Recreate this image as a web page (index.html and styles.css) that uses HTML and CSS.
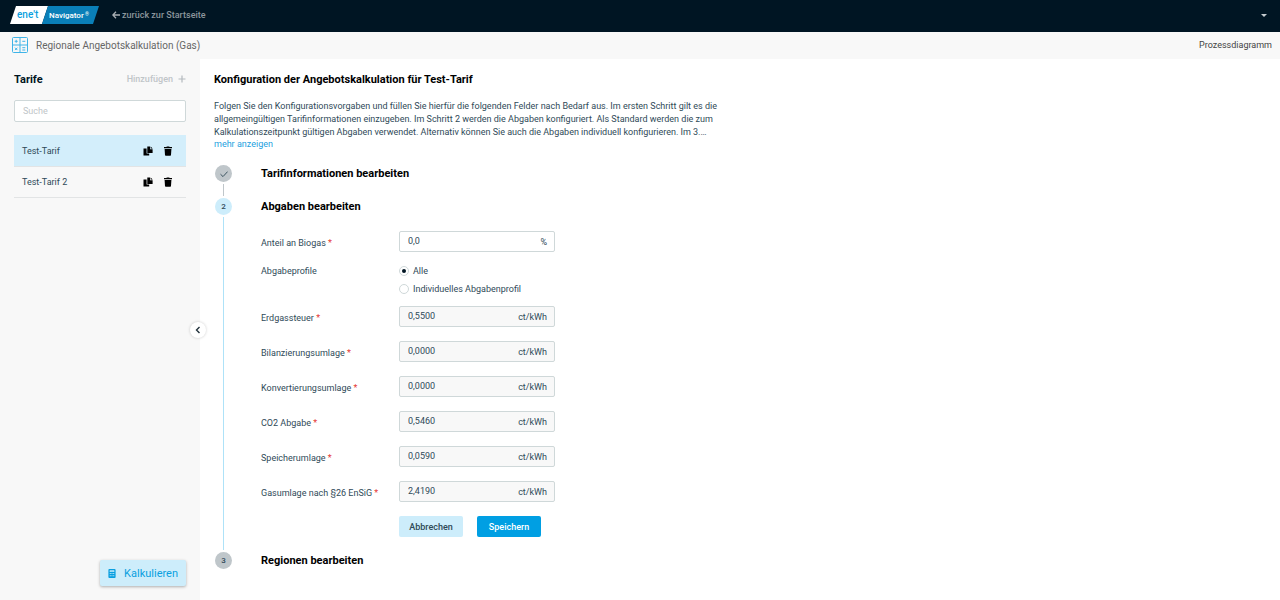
FILE: index.html
```html
<!DOCTYPE html>
<html lang="de">
<head>
    <meta charset="UTF-8">
    <meta name="viewport" content="width=device-width, initial-scale=1.0">
    <title>Regionale Angebotskalkulation (Gas)</title>
    <link rel="stylesheet" href="styles.css">
</head>
<body>
    <svg class="sprite" aria-hidden="true">
        <symbol id="icon-copy" viewBox="0 0 10 10">
            <path d="M0.5 2.5H3.6V7.6H6.2V9.5H0.5Z M4.3 0.5H7V3.2H9.6V7H4.3Z M7.6 0.4L9.7 2.6H7.6Z"/>
        </symbol>
        <symbol id="icon-trash" viewBox="0 0 10 10">
            <path d="M1 1H3.4L3.8 0.4H6.2L6.6 1H9V2.3H1Z M1.6 3H8.4L8 9C8 9.4 7.7 9.7 7.2 9.7H2.8C2.3 9.7 2 9.4 2 9Z"/>
        </symbol>
    </svg>

    <header class="topbar">
        <svg class="logo" viewBox="0 0 90 18" role="img" aria-label="ene't Navigator">
            <path d="M6 0H38L32 18H0Z" fill="#fff"/>
            <path d="M38 0H89L83 18H32Z" fill="#0a7fb8"/>
            <text class="logo-brand" x="7" y="12">ene't</text>
            <text class="logo-name" x="39" y="12">Navigator</text>
            <text class="logo-mark" x="75" y="10">®</text>
        </svg>
        <a class="back-link" href="#">
            <svg class="back-icon" viewBox="0 0 8 8"><path d="M8 4H1M4 0.8L0.8 4L4 7.2"/></svg>
            zurück zur Startseite
        </a>
        <button class="user-menu" type="button" aria-label="Benutzermenü"></button>
    </header>

    <div class="subbar">
        <svg class="calc-icon" viewBox="0 0 16 16">
            <rect x="0.5" y="0.5" width="15" height="15" rx="1"/>
            <path d="M8 0.5V15.5M0.5 8H15.5M2.7 4.3H5.7M4.2 2.8V5.8M10.3 4.3H13.3M3 10.7L5.4 13.1M5.4 10.7L3 13.1M10.3 10.7H13.3M10.3 13H13.3"/>
        </svg>
        <h1 class="page-title">Regionale Angebotskalkulation (Gas)</h1>
        <a class="process-link" href="#">Prozessdiagramm</a>
    </div>

    <div class="layout">
        <aside class="sidebar">
            <div class="sidebar-head">
                <h2 class="sidebar-title">Tarife</h2>
                <button class="add-btn" type="button">
                    Hinzufügen
                    <svg class="plus-icon" viewBox="0 0 8 8"><path d="M4 0.5V7.5M0.5 4H7.5"/></svg>
                </button>
            </div>
            <input class="search" type="text" placeholder="Suche" aria-label="Suche">
            <ul class="tariffs">
                <li class="tariff active">
                    <span class="tariff-name">Test-Tarif</span>
                    <button class="icon-btn" type="button" aria-label="Kopieren"><svg><use href="#icon-copy"/></svg></button>
                    <button class="icon-btn" type="button" aria-label="Löschen"><svg><use href="#icon-trash"/></svg></button>
                </li>
                <li class="tariff">
                    <span class="tariff-name">Test-Tarif 2</span>
                    <button class="icon-btn" type="button" aria-label="Kopieren"><svg><use href="#icon-copy"/></svg></button>
                    <button class="icon-btn" type="button" aria-label="Löschen"><svg><use href="#icon-trash"/></svg></button>
                </li>
            </ul>
            <button class="calc-btn" type="button">
                <svg class="calc-btn-icon" viewBox="0 0 8 10">
                    <rect width="8" height="10" rx="1" fill="#0a9fe0"/>
                    <path d="M1.5 2.5H6.5M1.5 5H6.5M1.5 7.5H6.5" stroke="#cdedfb" stroke-dasharray="1.2 0.7"/>
                    <path d="M1.5 2.2H6.5" stroke="#cdedfb" stroke-width="1.4"/>
                </svg>
                Kalkulieren
            </button>
            <button class="collapse-btn" type="button" aria-label="Seitenleiste einklappen">
                <svg viewBox="0 0 6 8"><path d="M4.5 1L1.5 4L4.5 7"/></svg>
            </button>
        </aside>

        <main class="content">
            <h2 class="content-title">Konfiguration der Angebotskalkulation für Test-Tarif</h2>
            <p class="intro">Folgen Sie den Konfigurationsvorgaben und füllen Sie hierfür die folgenden Felder nach Bedarf aus. Im ersten Schritt gilt es die allgemeingültigen Tarifinformationen einzugeben. Im Schritt 2 werden die Abgaben konfiguriert. Als Standard werden die zum Kalkulationszeitpunkt gültigen Abgaben verwendet. Alternativ können Sie auch die Abgaben individuell konfigurieren. Im 3.…</p>
            <a class="more-link" href="#">mehr anzeigen</a>

            <ol class="steps">
                <li class="step done">
                    <div class="step-track">
                        <span class="step-dot"><svg viewBox="0 0 8 8"><path d="M0.5 4.2L3 6.6L7.6 1.6"/></svg></span>
                    </div>
                    <h3 class="step-title">Tarifinformationen bearbeiten</h3>
                </li>
                <li class="step current">
                    <div class="step-track"><span class="step-dot">2</span></div>
                    <div class="step-body">
                        <h3 class="step-title">Abgaben bearbeiten</h3>
                        <form class="form">
                            <div class="row">
                                <label class="label" for="biogas">Anteil an Biogas <span class="required">*</span></label>
                                <div class="field"><input id="biogas" type="text" value="0,0"><span class="unit">%</span></div>
                            </div>
                            <div class="row profile-row" role="radiogroup" aria-labelledby="profile-label">
                                <span class="label" id="profile-label">Abgabeprofile</span>
                                <div class="radios">
                                    <label class="radio"><input type="radio" name="profile" checked>Alle</label>
                                    <label class="radio"><input type="radio" name="profile">Individuelles Abgabenprofil</label>
                                </div>
                            </div>
                            <div class="row">
                                <label class="label" for="erdgas">Erdgassteuer <span class="required">*</span></label>
                                <div class="field locked"><input id="erdgas" type="text" value="0,5500" readonly><span class="unit">ct/kWh</span></div>
                            </div>
                            <div class="row">
                                <label class="label" for="bilanz">Bilanzierungsumlage <span class="required">*</span></label>
                                <div class="field locked"><input id="bilanz" type="text" value="0,0000" readonly><span class="unit">ct/kWh</span></div>
                            </div>
                            <div class="row">
                                <label class="label" for="konv">Konvertierungsumlage <span class="required">*</span></label>
                                <div class="field locked"><input id="konv" type="text" value="0,0000" readonly><span class="unit">ct/kWh</span></div>
                            </div>
                            <div class="row">
                                <label class="label" for="co2">CO2 Abgabe <span class="required">*</span></label>
                                <div class="field locked"><input id="co2" type="text" value="0,5460" readonly><span class="unit">ct/kWh</span></div>
                            </div>
                            <div class="row">
                                <label class="label" for="speicher">Speicherumlage <span class="required">*</span></label>
                                <div class="field locked"><input id="speicher" type="text" value="0,0590" readonly><span class="unit">ct/kWh</span></div>
                            </div>
                            <div class="row">
                                <label class="label" for="gas">Gasumlage nach §26 EnSiG <span class="required">*</span></label>
                                <div class="field locked"><input id="gas" type="text" value="2,4190" readonly><span class="unit">ct/kWh</span></div>
                            </div>
                            <div class="actions">
                                <button class="btn btn-light" type="button">Abbrechen</button>
                                <button class="btn btn-primary" type="button">Speichern</button>
                            </div>
                        </form>
                    </div>
                </li>
                <li class="step">
                    <div class="step-track"><span class="step-dot">3</span></div>
                    <h3 class="step-title">Regionen bearbeiten</h3>
                </li>
            </ol>
        </main>
    </div>
</body>
</html>
```
FILE: styles.css
```css
* { box-sizing: border-box; }
body { margin: 0; min-height: 100vh; display: flex; flex-direction: column; font-family: Roboto, sans-serif; font-size: 9px; color: #2f4a58; background: #fff; }
h1, h2, h3, p, ul, ol { margin: 0; padding: 0; }
ul, ol { list-style: none; }
a { text-decoration: none; }
button, input { font-family: inherit; font-size: inherit; color: inherit; }
button { padding: 0; border: none; background: none; cursor: pointer; }
svg { display: block; }
.sprite { display: none; }

/* Header */
.topbar { display: flex; align-items: center; height: 32px; padding: 0 13px 2px 10px; background: #001523; }
.logo { width: 90px; height: 18px; }
.logo-brand { font-size: 10px; font-weight: 500; fill: #0a9fe0; }
.logo-name { font-size: 8px; font-weight: 500; fill: #fff; }
.logo-mark { font-size: 5px; fill: #fff; }
.back-link { display: flex; align-items: center; gap: 2px; margin-left: 12px; font-size: 9px; font-weight: 500; color: #8b959c; }
.back-icon { width: 8px; height: 8px; fill: none; stroke: #a9b0b5; stroke-width: 1.3; }
.user-menu { width: 0; height: 0; margin-left: auto; border: 3px solid transparent; border-top-color: #c5cbcf; border-bottom: none; }

.subbar { display: flex; align-items: center; height: 27px; padding: 0 8px 1px 12px; background: #f8f8f8; }
.calc-icon { width: 16px; height: 16px; fill: none; stroke: #3fb4e8; }
.page-title { margin-left: 8px; font-size: 10px; font-weight: 400; color: #666; }
.process-link { margin-left: auto; color: #444; }

/* Sidebar */
.layout { display: flex; flex: 1; }
.sidebar { position: relative; display: flex; flex-direction: column; flex: 0 0 200px; padding: 12px 14px 14px; background: #f8f8f8; }
.sidebar-head { display: flex; align-items: center; justify-content: space-between; height: 16px; margin-bottom: 13px; }
.sidebar-title { font-size: 11px; font-weight: 700; color: #001523; }
.add-btn { display: flex; align-items: center; gap: 5px; font-weight: 500; color: #c0c5c8; }
.plus-icon { width: 8px; height: 8px; fill: none; stroke: #b4babe; stroke-width: 1.2; }
.search { width: 100%; height: 22px; padding: 0 8px; border: 1px solid #cfd8d9; border-radius: 2px; background: #fff; }
.search::placeholder { color: #c0c5c8; opacity: 1; }
.tariffs { margin-top: 13px; }
.tariff { display: flex; align-items: center; gap: 10px; height: 31px; padding: 0 13px 0 8px; border-bottom: 1px solid #e2e4e5; }
.tariff.active { height: 32px; background: #d3eefb; }
.tariff-name { flex: 1; }
.icon-btn svg { width: 10px; height: 10px; fill: #000; }
.calc-btn { display: flex; align-items: center; align-self: flex-end; gap: 8px; height: 26px; margin-top: auto; padding: 0 8px; border-radius: 2px; font-size: 11px; color: #0a9fe0; background: #cdedfb; box-shadow: 0 1px 3px rgba(0,0,0,0.3); }
.calc-btn-icon { width: 8px; height: 9px; }
.collapse-btn { position: absolute; top: 50%; right: -6px; display: flex; align-items: center; justify-content: center; width: 16px; height: 16px; margin-top: -8px; border-radius: 50%; background: #fff; box-shadow: 0 0 3px rgba(0,0,0,0.2); }
.collapse-btn svg { width: 6px; height: 8px; fill: none; stroke: #22323c; stroke-width: 1.4; }

/* Content */
.content { flex: 1; padding: 13px 14px; }
.content-title { margin-bottom: 12px; font-size: 11px; line-height: 16px; font-weight: 700; color: #000; }
.intro { max-width: 506px; line-height: 13px; }
.more-link { display: block; line-height: 11px; color: #1e9fe0; }

.steps { margin-top: 15px; }
.step { display: flex; gap: 28px; min-height: 33px; }
.step-track { display: flex; flex-direction: column; align-items: center; width: 19px; }
.step-dot { display: flex; align-items: center; justify-content: center; width: 17px; height: 17px; border-radius: 50%; font-size: 8px; font-weight: 500; background: #bfc6ca; }
.step-dot svg { width: 8px; height: 8px; fill: none; stroke: #3d5562; }
.step:not(:last-child) .step-track::after { content: ""; flex: 1; width: 1px; margin: 2px 0; background: #bfc6ca; }
.step.current .step-dot { background: #cdedfb; }
.step.current:not(:last-child) .step-track::after { background: #aee2f8; }
.step-title { font-size: 11px; line-height: 17px; font-weight: 700; color: #000; }
.step-body { padding-bottom: 15px; }

/* Form */
.form { padding-top: 16px; }
.row { display: flex; align-items: center; margin-bottom: 14px; }
.label { width: 138px; padding-top: 2px; line-height: 12px; }
.required { color: #e53935; }
.field { display: flex; align-items: center; width: 156px; height: 21px; padding: 0 7px 0 8px; border: 1px solid #cfd8d9; border-radius: 2px; }
.field.locked { background: #f8f8f8; }
.field input { flex: 1; min-width: 0; padding: 0 0 2px; border: none; outline: none; background: none; }
.profile-row { align-items: flex-start; margin-top: -1px; margin-bottom: 11px; }
.profile-row .label { padding-top: 0; }
.radios { display: flex; flex-direction: column; gap: 6px; }
.radio { display: flex; align-items: center; gap: 4px; line-height: 12px; }
.radio input { display: flex; align-items: center; justify-content: center; appearance: none; width: 10px; height: 10px; margin: 0; border: 1px solid #cfd8d9; border-radius: 50%; background: #fff; }
.radio input:checked::before { content: ""; width: 4px; height: 4px; border-radius: 50%; background: #001523; }
.actions { display: flex; gap: 14px; margin-left: 138px; }
.btn { width: 64px; height: 21px; border-radius: 2px; font-weight: 500; }
.btn-light { background: #cdedfb; }
.btn-primary { color: #fff; background: #009fe3; }
```
